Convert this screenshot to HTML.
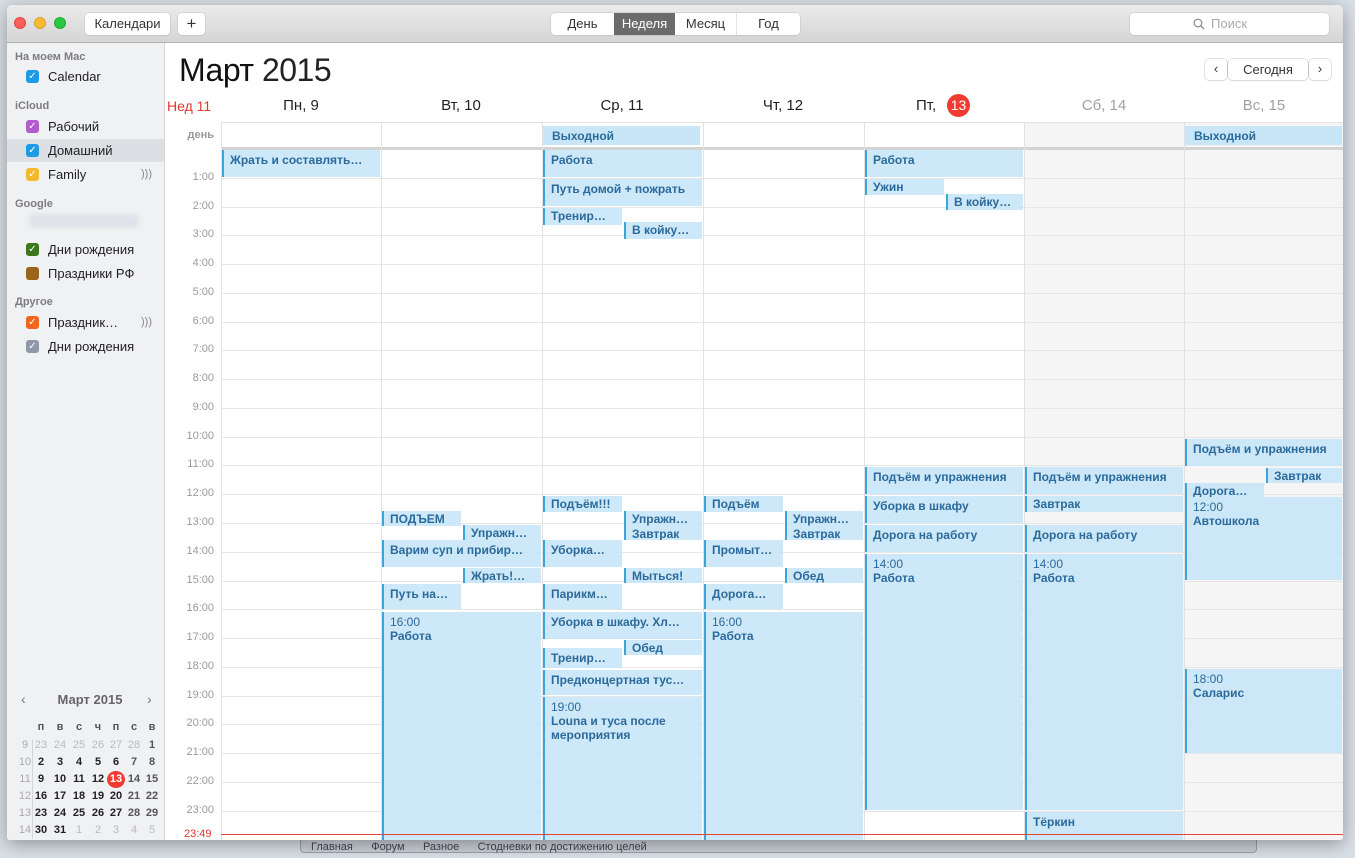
<!DOCTYPE html>
<html><head><meta charset="utf-8"><style>
*{margin:0;padding:0;box-sizing:border-box}
body{width:1355px;height:858px;overflow:hidden;background:#d9e0e6;font-family:"Liberation Sans","DejaVu Sans",sans-serif;position:relative}
.a{position:absolute}
.win{position:absolute;left:7px;top:5px;width:1336px;height:835px;background:#fff;border-radius:5px 5px 3px 3px;overflow:hidden;box-shadow:0 4px 18px rgba(0,0,0,.35)}
.tb{position:absolute;left:0;top:0;width:1336px;height:38px;background:linear-gradient(#ebebeb,#d5d5d5);border-bottom:1px solid #b3b3b3}
.btn{position:absolute;background:#fff;border-radius:4px;box-shadow:0 0 0 .5px #c4c4c4,0 1px 1px rgba(0,0,0,.08);font-size:13px;color:#333;text-align:center;line-height:22px;height:22px}
.sb{position:absolute;left:0;top:38px;width:158px;height:797px;background:#f0f1f3;border-right:1px solid #d8d8d8}
.sh{position:absolute;left:8px;font-size:11px;font-weight:bold;color:#7d7d7d}
.si{position:absolute;left:0;width:157px;height:23px;font-size:13px;color:#222;line-height:23px;padding-left:41px}
.cb{position:absolute;left:19px;top:5px;width:13px;height:13px;border-radius:3px;color:#fff;font-size:10px;line-height:13px;text-align:center;padding:0}
.hl{position:absolute;left:214px;height:1px;background:#e6e6e6;width:1122px}
.tl{position:absolute;left:150px;width:57px;text-align:right;font-size:11px;color:#9a9a9a}
.vl{position:absolute;top:118px;width:1px;height:717px;background:#e2e2e2}
.ev{position:absolute;background:rgba(196,228,247,.85);border-left:2px solid #3ba4df;padding:3px 0 0 6px;font-size:12px;font-weight:bold;color:#2b6a9b;overflow:hidden;white-space:nowrap;line-height:14px}
.ev i{font-style:normal;font-weight:normal;display:block}
.ad{position:absolute;top:121px;height:19px;background:#c8e6f7;font-size:12px;font-weight:bold;color:#2b6a9b;padding:3px 0 0 9px}
.dh{position:absolute;top:92px;width:160px;text-align:center;font-size:15px;color:#222;line-height:18px}
.mc{position:absolute;font-size:11px;width:18px;text-align:center;font-weight:bold;color:#222}
</style></head><body>
<div class="a" style="left:300px;top:836px;width:957px;height:17px;background:#c9d0d6;border:1px solid #9aa3ab;border-radius:0 0 4px 4px;font-size:11px;color:#445;line-height:12px;padding:4px 0 0 10px">Главная &nbsp;&nbsp;&nbsp;&nbsp; Форум &nbsp;&nbsp;&nbsp;&nbsp; Разное &nbsp;&nbsp;&nbsp;&nbsp; Стодневки по достижению целей</div>
<div class="win">
<div class="tb">
<div class="a" style="left:7px;top:12px;width:12px;height:12px;border-radius:50%;background:#fc5f57;border:.5px solid #df4744"></div>
<div class="a" style="left:27px;top:12px;width:12px;height:12px;border-radius:50%;background:#fdbc2e;border:.5px solid #de9f34"></div>
<div class="a" style="left:47px;top:12px;width:12px;height:12px;border-radius:50%;background:#28c840;border:.5px solid #27aa35"></div>
<div class="btn" style="left:78px;top:8px;width:85px">Календари</div>
<div class="btn" style="left:171px;top:8px;width:27px;font-size:17px">+</div>
<div class="btn" style="left:544px;top:8px;width:249px"></div>
<div class="a" style="left:544px;top:8px;width:63px;line-height:22px;font-size:13px;text-align:center;color:#333">День</div>
<div class="a" style="left:607px;top:8px;width:61px;height:22px;background:#6b6b6b;line-height:22px;font-size:13px;text-align:center;color:#fff">Неделя</div>
<div class="a" style="left:668px;top:8px;width:62px;line-height:22px;font-size:13px;text-align:center;color:#333;border-right:1px solid #e3e3e3">Месяц</div>
<div class="a" style="left:730px;top:8px;width:63px;line-height:22px;font-size:13px;text-align:center;color:#333">Год</div>
<div class="btn" style="left:1123px;top:8px;width:199px;color:#aaa;text-align:left;padding-left:81px">
<svg width="12" height="12" viewBox="0 0 12 12" style="position:absolute;left:63px;top:5px"><circle cx="5" cy="5" r="3.8" fill="none" stroke="#888" stroke-width="1.2"/><path d="M8 8l3 3" stroke="#888" stroke-width="1.3"/></svg>Поиск</div>
</div>
<div class="sb">
<div class="sh" style="top:8px">На моем Mac</div>
<div class="si" style="top:22px"><div class="cb" style="background:#1f9be6">✓</div>Calendar</div>
<div class="sh" style="top:57px">iCloud</div>
<div class="si" style="top:72px"><div class="cb" style="background:#b45ad0">✓</div>Рабочий</div>
<div class="si" style="top:96px;background:#dcdfe4"><div class="cb" style="background:#1f9be6">✓</div>Домашний</div>
<div class="si" style="top:120px"><div class="cb" style="background:#f5b82e">✓</div>Family<span style="position:absolute;right:12px;top:0;color:#888;font-size:11px">)))</span></div>
<div class="sh" style="top:155px">Google</div>
<div class="a" style="left:22px;top:171px;width:110px;height:14px;background:#dfe2e8;border-radius:6px;filter:blur(2px)"></div>
<div class="si" style="top:195px"><div class="cb" style="background:#3b7a1a">✓</div>Дни рождения</div>
<div class="si" style="top:219px"><div class="cb" style="background:#9b6418"></div>Праздники РФ</div>
<div class="sh" style="top:253px">Другое</div>
<div class="si" style="top:268px"><div class="cb" style="background:#f0651f">✓</div>Праздник…<span style="position:absolute;right:12px;top:0;color:#888;font-size:11px">)))</span></div>
<div class="si" style="top:292px"><div class="cb" style="background:#8e98a8">✓</div>Дни рождения</div>
<div class="a" style="left:14px;top:648px;font-size:14px;color:#777">‹</div>
<div class="a" style="left:0;top:649px;width:166px;text-align:center;font-size:13px;font-weight:bold;color:#666">Март 2015</div>
<div class="a" style="left:140px;top:648px;font-size:14px;color:#777">›</div>
<div class="a" style="left:25px;top:696px;width:1px;height:100px;background:#d6d6d6"></div>
<div id="mini"></div>
</div>
<div class="a" style="left:172px;top:47px;font-size:32px;color:#111;letter-spacing:-.5px">Март <span style="font-weight:300;color:#222">2015</span></div>
<div class="btn" style="left:1198px;top:54px;width:22px;height:21px;line-height:20px">‹</div>
<div class="btn" style="left:1221px;top:54px;width:80px;height:21px;line-height:21px">Сегодня</div>
<div class="btn" style="left:1302px;top:54px;width:22px;height:21px;line-height:20px">›</div>
<div class="a" style="left:160px;top:93px;font-size:14px;color:#e2382e">Нед 11</div>
<div class="dh" style="left:214px">Пн, 9</div>
<div class="dh" style="left:374px">Вт, 10</div>
<div class="dh" style="left:535px">Ср, 11</div>
<div class="dh" style="left:696px">Чт, 12</div>
<div class="a" style="left:909px;top:92px;font-size:15px;color:#222;line-height:18px">Пт,</div>
<div class="a" style="left:940px;top:89px;width:23px;height:23px;border-radius:50%;background:#f03a32;color:#fff;line-height:23px;font-size:14px;text-align:center">13</div>
<div class="dh" style="left:1017px;color:#a0a0a0">Сб, 14</div>
<div class="dh" style="left:1177px;color:#a0a0a0">Вс, 15</div>
<div class="a" style="left:1017px;top:118px;width:319px;height:717px;background:#f5f5f5"></div>
<div class="a" style="left:214px;top:117px;width:1122px;height:1px;background:#e2e2e2"></div>
<div class="a" style="left:214px;top:142px;width:1122px;height:3px;background:#d4d4d4"></div>
<div class="a" style="left:170px;top:124px;width:37px;text-align:right;font-size:11px;font-weight:bold;color:#999">день</div>
<div id="grid"></div>
<div class="ad" style="left:536px;width:157px">Выходной</div>
<div class="ad" style="left:1178px;width:157px">Выходной</div>
<div id="evs"></div>
<div class="a" style="left:214px;top:829px;width:1122px;height:1px;background:#e8433a"></div>
<div class="a" style="left:177px;top:823px;font-size:11px;color:#e2382e;background:#fff;padding-right:2px">23:49</div>
</div>
<script>
var g='',y0=144;
for(var h=1;h<=23;h++){var y=Math.round(y0+h*28.77);g+='<div class="hl" style="top:'+y+'px"></div><div class="tl" style="top:'+(y-7)+'px;left:150px">'+h+':00</div>';}
[214,374,535,696,857,1017,1177].forEach(function(x){g+='<div class="vl" style="left:'+x+'px"></div>';});
document.getElementById('grid').innerHTML=g;
var C=[214,374,535,696,857,1017,1177,1336];
function E(c,p,t,b,txt,tm){var l,w;if(p=='f'){l=C[c]+1;w=C[c+1]-C[c]-2}else if(p=='l'){l=C[c]+1;w=79}else{l=C[c]+82;w=C[c+1]-C[c]-83}
return '<div class="ev" style="left:'+l+'px;top:'+(t-5)+'px;width:'+w+'px;height:'+(b-t)+'px;'+(b-t<18?'padding-top:1px;':'')+'">'+(tm?'<i>'+tm+'</i>':'')+txt+'</div>';}
var L=[
[0,'f',150,177,'Жрать и составлять…'],
[1,'l',511,526,'ПОДЪЕМ'],[1,'r',525,540,'Упражн…'],[1,'f',540,567,'Варим суп и прибир…'],[1,'r',568,583,'Жрать!…'],[1,'l',584,609,'Путь на…'],[1,'f',612,845,'Работа','16:00'],
[2,'f',150,177,'Работа'],[2,'f',179,206,'Путь домой + пожрать'],[2,'l',208,225,'Тренир…'],[2,'r',222,239,'В койку…'],
[2,'l',496,512,'Подъём!!!'],[2,'r',511,526,'Упражн…'],[2,'r',526,540,'Завтрак'],[2,'l',540,567,'Уборка…'],[2,'r',568,583,'Мыться!'],[2,'l',584,609,'Парикм…'],[2,'f',612,639,'Уборка в шкафу. Хл…'],[2,'r',640,655,'Обед'],[2,'l',648,668,'Тренир…'],[2,'f',670,695,'Предконцертная тус…'],[2,'f',697,845,'Louna и туса после<br>мероприятия','19:00'],
[3,'l',496,512,'Подъём'],[3,'r',511,526,'Упражн…'],[3,'r',526,540,'Завтрак'],[3,'l',540,567,'Промыт…'],[3,'r',568,583,'Обед'],[3,'l',584,609,'Дорога…'],[3,'f',612,845,'Работа','16:00'],
[4,'f',150,177,'Работа'],[4,'l',179,195,'Ужин'],[4,'r',194,210,'В койку…'],[4,'f',467,494,'Подъём и упражнения'],[4,'f',496,523,'Уборка в шкафу'],[4,'f',525,552,'Дорога на работу'],[4,'f',554,810,'Работа','14:00'],
[5,'f',467,494,'Подъём и упражнения'],[5,'f',496,512,'Завтрак'],[5,'f',525,552,'Дорога на работу'],[5,'f',554,810,'Работа','14:00'],[5,'f',812,845,'Тёркин'],
[6,'f',439,466,'Подъём и упражнения'],[6,'r',468,483,'Завтрак'],[6,'l',483,497,'Дорога…'],[6,'f',497,580,'Автошкола','12:00'],[6,'f',669,753,'Саларис','18:00']];
var s='';L.forEach(function(a){s+=E(a[0],a[1],a[2],a[3],a[4],a[5]);});
document.getElementById('evs').innerHTML=s;
var m='',X=[34,53,72,91,109,127,145],hdr=['п','в','с','ч','п','с','в'];
hdr.forEach(function(d,i){m+='<div class="mc" style="left:'+(X[i]-9)+'px;top:678px;color:#555">'+d+'</div>';});
var rows=[[9,[23,24,25,26,27,28,1]],[10,[2,3,4,5,6,7,8]],[11,[9,10,11,12,13,14,15]],[12,[16,17,18,19,20,21,22]],[13,[23,24,25,26,27,28,29]],[14,[30,31,1,2,3,4,5]]];
rows.forEach(function(r,ri){var y=696+ri*17;m+='<div class="mc" style="left:9px;top:'+y+'px;color:#aaa;font-weight:normal">'+r[0]+'</div>';
r[1].forEach(function(d,i){var gray=(ri==0&&i<6)||(ri==5&&i>1);var we=i>=5;var col=gray?'#bbb':(we?'#555':'#222');var st='left:'+(X[i]-9)+'px;top:'+y+'px;color:'+col+';';if(gray)st+='font-weight:normal;';
if(ri==2&&i==4)st+='background:#f03a32;color:#fff;border-radius:50%;height:17px;line-height:17px;top:'+(y-2)+'px;';
m+='<div class="mc" style="'+st+'">'+d+'</div>';});});
document.getElementById('mini').innerHTML=m;
</script>
</body></html>
